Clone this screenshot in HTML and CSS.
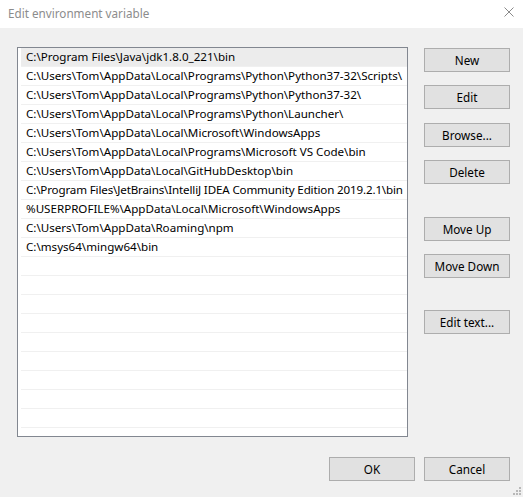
FILE: index.html
```html
<!DOCTYPE html>
<html>
<head>
<meta charset="utf-8">
<link rel="stylesheet" href="styles.css">
</head>
<body>
<div class="dialog">
  <div class="titlebar">
    <span class="title">Edit environment variable</span>
    <svg class="close" width="10" height="10" viewBox="0 0 10 10"><path d="M0.5 0.5 L9.5 9.5 M9.5 0.5 L0.5 9.5" stroke="#8a8a8a" stroke-width="1" fill="none"/></svg>
  </div>
  <div class="body">
    <div class="main">
      <div class="list">
        <div class="row sel">C:\Program Files\Java\jdk1.8.0_221\bin</div>
        <div class="row">C:\Users\Tom\AppData\Local\Programs\Python\Python37-32\Scripts\</div>
        <div class="row">C:\Users\Tom\AppData\Local\Programs\Python\Python37-32\</div>
        <div class="row">C:\Users\Tom\AppData\Local\Programs\Python\Launcher\</div>
        <div class="row">C:\Users\Tom\AppData\Local\Microsoft\WindowsApps</div>
        <div class="row">C:\Users\Tom\AppData\Local\Programs\Microsoft VS Code\bin</div>
        <div class="row">C:\Users\Tom\AppData\Local\GitHubDesktop\bin</div>
        <div class="row tight">C:\Program Files\JetBrains\IntelliJ IDEA Community Edition 2019.2.1\bin</div>
        <div class="row">%USERPROFILE%\AppData\Local\Microsoft\WindowsApps</div>
        <div class="row">C:\Users\Tom\AppData\Roaming\npm</div>
        <div class="row">C:\msys64\mingw64\bin</div>
        <div class="row"></div>
        <div class="row"></div>
        <div class="row"></div>
        <div class="row"></div>
        <div class="row"></div>
        <div class="row"></div>
        <div class="row"></div>
        <div class="row"></div>
        <div class="row"></div>
        <div class="row"></div>
      </div>
      <div class="side">
        <button class="btn">New</button>
        <button class="btn g13">Edit</button>
        <button class="btn g14">Browse...</button>
        <button class="btn g13">Delete</button>
        <button class="btn g33">Move Up</button>
        <button class="btn g13">Move Down</button>
        <button class="btn g32">Edit text...</button>
      </div>
    </div>
    <div class="footer">
      <button class="btn">OK</button>
      <button class="btn">Cancel</button>
    </div>
    <div class="grip">
      <i class="d1"></i><i class="d2"></i><i class="d3"></i><i class="d4"></i><i class="d5"></i><i class="d6"></i>
    </div>
  </div>
</div>
</body>
</html>
```
FILE: styles.css
```css
* { box-sizing: border-box; }
html, body {
  margin: 0;
  padding: 0;
  width: 523px;
  height: 497px;
  overflow: hidden;
  background: #f0f0f0;
  font-family: "Noto Sans", "Liberation Sans", sans-serif;
  font-size: 11.6px;
  color: #000;
}
.dialog {
  display: flex;
  flex-direction: column;
  height: 497px;
}
.titlebar {
  height: 28px;
  background: #fff;
  display: flex;
  align-items: center;
  justify-content: space-between;
  padding: 0 9px 0 8px;
}
.title {
  color: #8c8c8c;
  font-size: 11.7px;
  margin-top: -3px;
}
.close {
  display: block;
  margin-top: -4px;
}
.body {
  position: relative;
  flex: 1;
  padding: 19px 13px 0 17px;
}
.main {
  display: flex;
  gap: 16px;
}
.list {
  width: 392px;
  height: 390px;
  border: 1px solid #828790;
  background: #fff;
  overflow: hidden;
}
.row {
  height: 19px;
  line-height: 18px;
  border-bottom: 1px solid #f0f0f0;
  margin-left: 3px;
  padding-left: 5px;
  white-space: nowrap;
  overflow: hidden;
}
.row.sel {
  background: #ececec;
}
.row.tight {
  letter-spacing: -0.15px;
}
.side {
  display: flex;
  flex-direction: column;
  padding-top: 1px;
}
.btn {
  width: 86px;
  height: 24px;
  background: #e1e1e1;
  border: 1px solid #adadad;
  font-family: inherit;
  font-size: 11.7px;
  line-height: 20px;
  color: #000;
  padding: 0 0 1px 0;
  margin: 0;
}
.g13 { margin-top: 13px; }
.g14 { margin-top: 14px; }
.g33 { margin-top: 33px; }
.g32 { margin-top: 32px; }
.footer {
  display: flex;
  justify-content: flex-end;
  gap: 9px;
  margin-top: 20px;
}
.grip {
  position: absolute;
  right: 0;
  bottom: 0;
  width: 12px;
  height: 12px;
}
.grip i {
  position: absolute;
  width: 2px;
  height: 2px;
  background: #b8b8b8;
}
.d1 { right: 2px; bottom: 8px; }
.d2 { right: 2px; bottom: 5px; }
.d3 { right: 5px; bottom: 5px; }
.d4 { right: 2px; bottom: 2px; }
.d5 { right: 5px; bottom: 2px; }
.d6 { right: 8px; bottom: 2px; }
```
